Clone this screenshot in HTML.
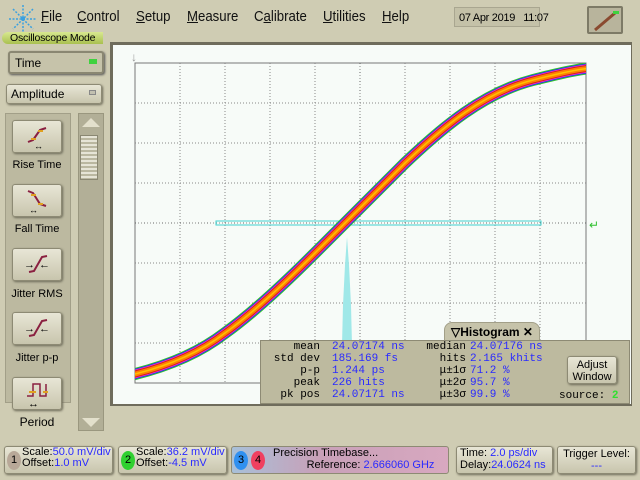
<!DOCTYPE html>
<html><head><meta charset="utf-8"><style>
*{margin:0;padding:0;box-sizing:border-box}
body{width:640px;height:480px;overflow:hidden;background:#cfccb3;font-family:"Liberation Sans",sans-serif;position:relative}
.a{position:absolute;white-space:nowrap}
.menu{top:8px;font-size:15px;color:#111;transform:scaleX(0.88);transform-origin:left}
.btn{background:linear-gradient(#e8e6d6,#c8c5ad);border:1px solid #8d8a74;border-radius:3px;box-shadow:1px 1px 2px #6c6a58}
.lbl{font-size:11px;color:#000;text-align:center;width:70px}
.mono{font-family:"Liberation Mono",monospace;font-size:11px}
.blue{color:#2a2aff}
.sm{font-size:11px}
</style></head><body>
<svg class="a" style="left:8px;top:4px" width="30" height="30" viewBox="0 0 30 30">
<g stroke="#3aa0e0" stroke-width="1.5" stroke-dasharray="2 1.5">
<line x1="15" y1="1" x2="15" y2="29"/><line x1="1" y1="15" x2="29" y2="15"/>
<line x1="5" y1="5" x2="25" y2="25"/><line x1="25" y1="5" x2="5" y2="25"/></g>
<circle cx="15" cy="15" r="2" fill="#3aa0e0"/></svg>
<div class="a menu" style="left:41px"><u>F</u>ile</div>
<div class="a menu" style="left:77px"><u>C</u>ontrol</div>
<div class="a menu" style="left:136px"><u>S</u>etup</div>
<div class="a menu" style="left:187px"><u>M</u>easure</div>
<div class="a menu" style="left:254px">C<u>a</u>librate</div>
<div class="a menu" style="left:323px"><u>U</u>tilities</div>
<div class="a menu" style="left:382px"><u>H</u>elp</div>
<div class="a" style="left:454px;top:7px;width:86px;height:20px;background:#c4c1a8;border:1px solid #a9a690;font-size:11px;padding:4px 0 0 4px;letter-spacing:-0.3px">07 Apr 2019&nbsp;&nbsp; 11:07</div>
<div class="a" style="left:587px;top:6px;width:36px;height:28px;background:#b8b49c;border:2px solid #7d7a66;border-radius:2px"></div>
<svg class="a" style="left:589px;top:8px" width="32" height="24"><line x1="6" y1="22" x2="26" y2="5" stroke="#8a4a30" stroke-width="3"/><rect x="24" y="3" width="6" height="3" fill="#3fd23f"/></svg>
<div class="a" style="left:2px;top:32px;width:101px;height:12px;background:linear-gradient(#d8e890,#a9c050);border-radius:6px 0 0 6px;font-size:10.5px;line-height:12px;padding-left:8px;letter-spacing:-0.2px">Oscilloscope Mode</div>
<div class="a" style="left:8px;top:51px;width:96px;height:23px;background:#c6c3aa;border:2px solid #8a8772;border-radius:3px;box-shadow:1px 1px 2px #555;font-size:12px;padding:3px 0 0 5px">Time<span class="a" style="right:5px;top:6px;width:8px;height:5px;background:#3fd23f"></span></div>
<div class="a btn" style="left:6px;top:84px;width:96px;height:20px;font-size:12px;padding:2px 0 0 4px">Amplitude<span class="a" style="right:5px;top:5px;width:7px;height:5px;background:#c2c0b0;border:1px solid #888"></span></div>
<div class="a" style="left:5px;top:113px;width:66px;height:290px;background:#bcb9a0;border:1px solid #a29f88"></div>
<div class="a" style="left:78px;top:113px;width:26px;height:318px;background:#b2af97;border:1px solid #9a977f"></div>
<div class="a" style="left:80px;top:135px;width:18px;height:45px;background:repeating-linear-gradient(#e6e4d6 0 2px,#bab7a0 2px 4px);border:1px solid #8a8772"></div>
<svg class="a" style="left:80px;top:115px" width="22" height="14"><polygon points="2,12 11,3 20,12" fill="#e3e0cc"/></svg>
<svg class="a" style="left:80px;top:416px" width="22" height="14"><polygon points="2,2 11,11 20,2" fill="#e3e0cc"/></svg>
<div class="a btn" style="left:12px;top:120px;width:50px;height:33px"></div>
<svg class="a" style="left:25px;top:124px" width="24" height="26"><path d="M3 18 L8 16 L15 6 L21 4" stroke="#8a2040" stroke-width="2" fill="none"/><line x1="6" y1="15" x2="11" y2="15" stroke="#e0a020" stroke-width="2"/><line x1="13" y1="7" x2="18" y2="7" stroke="#e0a020" stroke-width="2"/><text x="9" y="25" font-size="9">↔</text></svg>
<div class="a lbl" style="left:2px;top:159px">Rise Time</div>
<div class="a btn" style="left:12px;top:184px;width:50px;height:33px"></div>
<svg class="a" style="left:25px;top:188px" width="24" height="26"><path d="M3 3 L8 5 L15 16 L21 18" stroke="#8a2040" stroke-width="2" fill="none"/><line x1="6" y1="7" x2="11" y2="7" stroke="#e0a020" stroke-width="2"/><line x1="13" y1="16" x2="18" y2="16" stroke="#e0a020" stroke-width="2"/><text x="4" y="25" font-size="9">↔</text></svg>
<div class="a lbl" style="left:2px;top:223px">Fall Time</div>
<div class="a btn" style="left:12px;top:248px;width:50px;height:33px"></div>
<svg class="a" style="left:22px;top:252px" width="30" height="24"><path d="M7 20 L12 19 L20 5 L25 4" stroke="#8a2040" stroke-width="2" fill="none"/><text x="2" y="16" font-size="11">→</text><text x="17" y="16" font-size="11">←</text></svg>
<div class="a lbl" style="left:2px;top:288px">Jitter RMS</div>
<div class="a btn" style="left:12px;top:312px;width:50px;height:33px"></div>
<svg class="a" style="left:22px;top:316px" width="30" height="24"><path d="M7 20 L12 19 L20 5 L25 4" stroke="#8a2040" stroke-width="2" fill="none"/><text x="2" y="16" font-size="11">→</text><text x="17" y="16" font-size="11">←</text></svg>
<div class="a lbl" style="left:2px;top:352px">Jitter p-p</div>
<div class="a btn" style="left:12px;top:377px;width:50px;height:33px"></div>
<svg class="a" style="left:24px;top:380px" width="28" height="28"><path d="M3 16 L9 16 L9 4 L16 4 L16 16 L22 16 L22 4" stroke="#8a2040" stroke-width="1.5" fill="none"/><line x1="5" y1="12" x2="12" y2="12" stroke="#e0a020" stroke-width="2"/><line x1="19" y1="12" x2="24" y2="12" stroke="#e0a020" stroke-width="2"/><text x="4" y="27" font-size="11">↔</text></svg>
<div class="a lbl" style="left:2px;top:415px;font-size:12px">Period</div>
<div class="a" style="left:110px;top:42px;width:522px;height:364px;background:#6f6c5c"></div>
<div class="a" style="left:113px;top:45px;width:518px;height:359px;background:#f7fbf8"></div>
<svg class="a" style="left:113px;top:45px" width="518" height="359">
<defs><clipPath id="k"><rect x="22" y="18" width="451" height="320"/></clipPath></defs>
<text x="18" y="16" font-size="12" fill="#999">↓</text>
<rect x="22" y="18" width="451" height="320" fill="none" stroke="#777"/>
<g stroke="#888" stroke-dasharray="1 2">
<line x1="67" y1="18" x2="67" y2="338"/><line x1="112" y1="18" x2="112" y2="338"/><line x1="157" y1="18" x2="157" y2="338"/><line x1="202" y1="18" x2="202" y2="338"/><line x1="247" y1="18" x2="247" y2="338"/><line x1="292" y1="18" x2="292" y2="338"/><line x1="337" y1="18" x2="337" y2="338"/><line x1="382" y1="18" x2="382" y2="338"/><line x1="427" y1="18" x2="427" y2="338"/>
<line x1="22" y1="58" x2="473" y2="58"/><line x1="22" y1="98" x2="473" y2="98"/><line x1="22" y1="138" x2="473" y2="138"/><line x1="22" y1="178" x2="473" y2="178"/><line x1="22" y1="218" x2="473" y2="218"/><line x1="22" y1="258" x2="473" y2="258"/><line x1="22" y1="298" x2="473" y2="298"/>
</g>
<line x1="22" y1="178" x2="473" y2="178" stroke="#666" stroke-dasharray="1 8"/>
<line x1="247" y1="18" x2="247" y2="338" stroke="#666" stroke-dasharray="1 8"/>
<rect x="103" y="176" width="325" height="4" fill="none" stroke="#40d0d0"/>
<polygon points="229,300 230,260 232,220 234,192 236,220 238,260 239,300" fill="#a0e8e8"/>
<text x="476" y="184" font-size="12" fill="#30c030">↵</text>
<g fill="none" stroke-linejoin="round" clip-path="url(#k)">
<path id="c" d="M18 330 C60 320 90 305 112 288 C140 268 170 240 202 208 C230 180 260 150 292 118 C330 82 370 48 420 35 C440 30 460 25 478 23"/>
<use href="#c" stroke="#30c030" stroke-width="12"/>
<use href="#c" stroke="#2030ff" stroke-width="10"/>
<use href="#c" stroke="#ff30c0" stroke-width="8.5"/>
<use href="#c" stroke="#d02020" stroke-width="7"/>
<use href="#c" stroke="#ff8000" stroke-width="5"/>
<use href="#c" stroke="#ffc000" stroke-width="1.5"/>
</g>
</svg>
<div class="a" style="left:444px;top:322px;width:96px;height:20px;background:#c6c3aa;border:1px solid #a29f88;border-radius:8px 8px 0 0;font-size:12px;font-weight:bold;padding:2px 0 0 6px">▽Histogram ✕</div>
<div class="a" style="left:260px;top:340px;width:370px;height:64px;background:#bdba9f;border:1px solid #8d8a74"></div>
<div class="a mono" style="left:262px;top:341px;width:58px;text-align:right;line-height:12px">mean<br>std dev<br>p-p<br>peak<br>pk pos</div>
<div class="a mono blue" style="left:332px;top:341px;line-height:12px">24.07174 ns<br>185.169 fs<br>1.244 ps<br>226 hits<br>24.07171 ns</div>
<div class="a mono" style="left:410px;top:341px;width:56px;text-align:right;line-height:12px">median<br>hits<br>μ±1σ<br>μ±2σ<br>μ±3σ</div>
<div class="a mono blue" style="left:470px;top:341px;line-height:12px">24.07176 ns<br>2.165 khits<br>71.2 %<br>95.7 %<br>99.9 %</div>
<div class="a btn" style="left:567px;top:356px;width:50px;height:28px;font-size:11px;text-align:center;line-height:12px;padding-top:2px">Adjust<br>Window</div>
<div class="a mono" style="left:559px;top:390px">source: <b style="color:#30e030">2</b></div>
<div class="a btn" style="left:4px;top:446px;width:109px;height:28px"></div>
<div class="a" style="left:7px;top:451px;width:14px;height:19px;border-radius:50%;background:#b8a898;font-size:11px;text-align:center;line-height:19px">1</div>
<div class="a sm" style="left:22px;top:447px;line-height:11px">Scale:<span class="blue">50.0 mV/div</span><br>Offset:<span class="blue">1.0 mV</span></div>
<div class="a btn" style="left:118px;top:446px;width:109px;height:28px"></div>
<div class="a" style="left:121px;top:451px;width:14px;height:19px;border-radius:50%;background:#30d030;font-size:11px;text-align:center;line-height:19px">2</div>
<div class="a sm" style="left:136px;top:447px;line-height:11px">Scale:<span class="blue">36.2 mV/div</span><br>Offset:<span class="blue">-4.5 mV</span></div>
<div class="a" style="left:231px;top:446px;width:218px;height:28px;background:linear-gradient(90deg,#a8c0d8,#c8a0b8 40%,#d8a8c0);border:1px solid #8d8a74;border-radius:3px"></div>
<div class="a" style="left:234px;top:451px;width:14px;height:19px;border-radius:50%;background:#3090f0;font-size:11px;text-align:center;line-height:19px">3</div>
<div class="a" style="left:251px;top:451px;width:14px;height:19px;border-radius:50%;background:#f04060;font-size:11px;text-align:center;line-height:19px">4</div>
<div class="a sm" style="left:273px;top:447px;line-height:12px">Precision Timebase...<br>&nbsp;&nbsp;&nbsp;&nbsp;&nbsp;&nbsp;&nbsp;&nbsp;&nbsp;&nbsp;&nbsp;Reference: <span class="blue">2.666060 GHz</span></div>
<div class="a btn" style="left:456px;top:446px;width:97px;height:28px"></div>
<div class="a sm" style="left:460px;top:447px;line-height:12px">Time: <span class="blue">2.0 ps/div</span><br>Delay:<span class="blue">24.0624 ns</span></div>
<div class="a btn" style="left:557px;top:446px;width:79px;height:28px;font-size:11px;text-align:center;line-height:12px;padding-top:1px">Trigger Level:<br><span class="blue">---</span></div>
</body></html>
